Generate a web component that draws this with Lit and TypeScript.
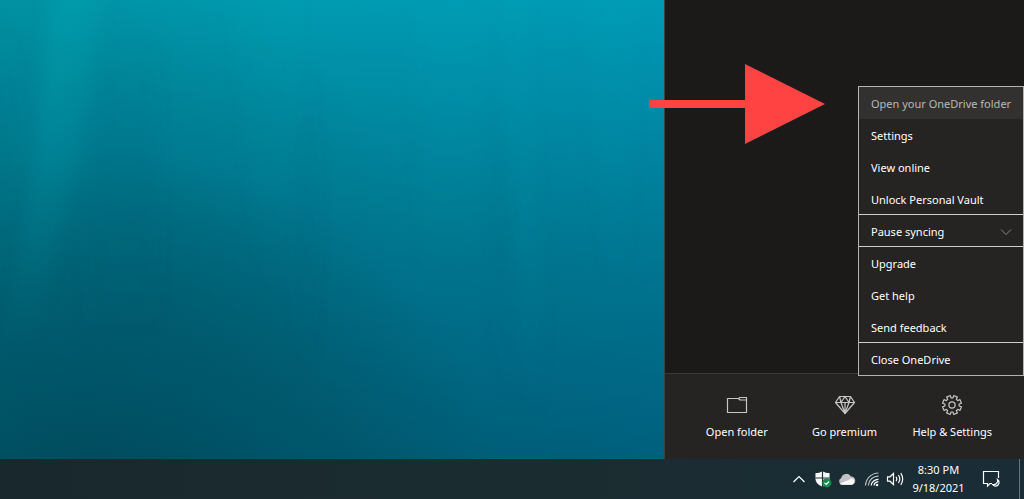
import { LitElement, html, css, svg } from "lit";
import { customElement } from "lit/decorators.js";
import { classMap } from "lit/directives/class-map.js";

interface MenuEntry {
  label: string;
  active?: boolean;
  divided?: boolean;
  expandable?: boolean;
}

const MENU: MenuEntry[] = [
  { label: "Open your OneDrive folder", active: true },
  { label: "Settings" },
  { label: "View online" },
  { label: "Unlock Personal Vault", divided: true },
  { label: "Pause syncing", divided: true, expandable: true },
  { label: "Upgrade" },
  { label: "Get help" },
  { label: "Send feedback", divided: true },
  { label: "Close OneDrive" },
];

// Outline of a cog with eight flat teeth, centred on (12, 12).
function cogPath(): string {
  const teeth = 8;
  const outer = 9.6;
  const inner = 7.2;
  const points: string[] = [];
  for (let i = 0; i < teeth; i++) {
    const mid = (i / teeth) * Math.PI * 2 + Math.PI / 8;
    const corners: [number, number][] = [
      [inner, -0.25],
      [outer, -0.21],
      [outer, 0.21],
      [inner, 0.25],
    ];
    for (const [r, a] of corners) {
      points.push(`${(12 + r * Math.cos(mid + a)).toFixed(2)} ${(12 + r * Math.sin(mid + a)).toFixed(2)}`);
    }
  }
  return `M${points.join("L")}Z`;
}

@customElement("sea-wallpaper")
export class SeaWallpaper extends LitElement {
  static styles = css`
    :host {
      display: block;
      overflow: hidden;
      background:
        radial-gradient(ellipse 60% 75% at 15% 108%, rgba(0, 68, 84, 0.65), rgba(0, 70, 88, 0) 100%),
        radial-gradient(ellipse 40% 60% at 24% 60%, rgba(0, 84, 104, 0.22), rgba(0, 88, 108, 0) 100%),
        linear-gradient(90deg, rgba(0, 90, 90, 0.2), rgba(0, 110, 130, 0.08) 45%, rgba(0, 130, 190, 0.14)),
        linear-gradient(180deg, #009eb4 0%, #008ba2 25%, #00788f 50%, #006a82 72%, #005a72 100%);
    }
    .rays {
      display: block;
      width: 100%;
      height: 100%;
    }
  `;

  render() {
    return html`
      <svg class="rays" viewBox="0 0 664 459" preserveAspectRatio="none" aria-hidden="true">
        <defs>
          <filter id="soft" x="-50%" y="-10%" width="200%" height="120%"><feGaussianBlur stdDeviation="8 4" /></filter>
          <linearGradient id="fade" x1="0" y1="0" x2="0" y2="1">
            <stop offset="0" stop-color="#12b0bc" stop-opacity=".2" />
            <stop offset=".5" stop-color="#12a8b6" stop-opacity=".16" />
            <stop offset="1" stop-color="#12a4b4" stop-opacity="0" />
          </linearGradient>
          <linearGradient id="shade" x1="0" y1="0" x2="0" y2="1">
            <stop offset="0" stop-color="#00607a" stop-opacity="0" />
            <stop offset=".5" stop-color="#00607a" stop-opacity=".14" />
            <stop offset="1" stop-color="#00607a" stop-opacity="0" />
          </linearGradient>
        </defs>
        <g filter="url(#soft)">
          <path fill="url(#fade)" d="M50 -20H106L70 190L34 350H4L36 170Z" />
          <path fill="url(#fade)" opacity=".6" d="M56 -20H88L48 170L26 290H10L34 170Z" />
          <path fill="url(#fade)" opacity=".3" d="M228 -20H300L284 300H262Z" />
          <path fill="url(#fade)" opacity=".4" d="M410 -20H490L470 290H424Z" />
          <path fill="url(#fade)" opacity=".5" d="M500 -20H524L548 420H526Z" />
          <path fill="url(#fade)" opacity=".4" d="M580 -20H640L625 300H606Z" />
          <path fill="url(#shade)" d="M100 30H160L160 340H80Z" />
          <path fill="url(#shade)" d="M300 60H316L314 380H296Z" />
          <path fill="url(#shade)" d="M490 100H506L520 400H500Z" />
          <path fill="url(#shade)" opacity=".7" d="M0 20H20L8 240H-10Z" />
        </g>
      </svg>
    `;
  }
}

@customElement("onedrive-menu")
export class OneDriveMenu extends LitElement {
  static styles = css`
    :host {
      display: block;
      box-sizing: border-box;
      border: 1px solid #b4b3b2;
      background: #252423;
    }
    .item {
      display: flex;
      align-items: center;
      justify-content: space-between;
      box-sizing: border-box;
      width: 100%;
      height: 32px;
      margin: 0;
      padding: 2px 11px 0 12px;
      border: 0;
      background: transparent;
      color: #fff;
      font: inherit;
      line-height: 16px;
      text-align: left;
      white-space: nowrap;
    }
    .active {
      background: #323130;
      color: #bab8b6;
      padding-right: 0;
    }
    .divided {
      border-bottom: 1px solid #cfcecd;
    }
    .chevron {
      width: 12px;
      height: 12px;
      fill: none;
      stroke: #8a8886;
    }
  `;

  render() {
    return html`${MENU.map(
      (entry) => html`
        <button
          type="button"
          role="menuitem"
          class=${classMap({ item: true, active: !!entry.active, divided: !!entry.divided })}
        >
          <span>${entry.label}</span>
          ${entry.expandable
            ? html`<svg class="chevron" viewBox="0 0 12 12" aria-hidden="true"><path d="M1 3.5L6 8.5L11 3.5" /></svg>`
            : null}
        </button>
      `
    )}`;
  }
}

@customElement("onedrive-panel")
export class OneDrivePanel extends LitElement {
  static styles = css`
    :host {
      display: flex;
      flex-direction: column;
      box-sizing: border-box;
      position: relative;
      border-left: 1px solid #3b4244;
      background: #1b1a19;
    }
    .activity {
      flex: 1;
    }
    .actions {
      display: flex;
      box-sizing: border-box;
      height: 86px;
      padding: 0 18px;
      border-top: 1px solid #3b3a39;
      background: #252423;
    }
    .action {
      display: flex;
      flex: 1;
      flex-direction: column;
      align-items: center;
      gap: 7px;
      margin: 0;
      padding: 19px 0 0;
      border: 0;
      background: transparent;
      color: #fff;
      font: inherit;
      line-height: 16px;
      white-space: nowrap;
    }
    .icon {
      width: 24px;
      height: 24px;
      fill: none;
      stroke: #c8c6c4;
      stroke-width: 1.2;
      stroke-linejoin: round;
    }
    .menu {
      position: absolute;
      right: 0;
      bottom: 83px;
      width: 166px;
    }
  `;

  private action(label: string, shape: unknown) {
    return html`
      <button type="button" class="action">
        <svg class="icon" viewBox="0 0 24 24" aria-hidden="true">${shape}</svg>
        <span>${label}</span>
      </button>
    `;
  }

  render() {
    return html`
      <div class="activity"></div>
      <div class="actions">
        ${this.action(
          "Open folder",
          svg`<path d="M2.5 5.5H13.5L15 4.5H21.5V19.5H2.5Z" /><path d="M13.5 5.5L15 7H21.5" />`
        )}
        ${this.action(
          "Go premium",
          svg`<path d="M6.5 3.5H17.5L21.5 9.5L12 20.5L2.5 9.5Z" /><path d="M2.5 9.5H21.5M8 9.5L12 20.5L16 9.5M6.5 3.5L8 9.5L12 3.5L16 9.5L17.5 3.5M12 9.5V20" />`
        )}
        ${this.action("Help & Settings", svg`<path d=${cogPath()} /><circle cx="12" cy="12" r="3.1" />`)}
      </div>
      <onedrive-menu class="menu" role="menu"></onedrive-menu>
    `;
  }
}

@customElement("task-bar")
export class TaskBar extends LitElement {
  static styles = css`
    :host {
      display: flex;
      align-items: stretch;
      justify-content: flex-end;
      box-sizing: border-box;
      height: 40px;
      background: linear-gradient(90deg, #19282c, #1b2c30 50%, #1a2c36);
      color: #fff;
    }
    .tray {
      display: flex;
      align-items: center;
    }
    .tray-button {
      display: flex;
      align-items: center;
      justify-content: center;
      width: 24px;
      height: 40px;
      margin: 0;
      padding: 0;
      border: 0;
      background: transparent;
      color: inherit;
      font: inherit;
    }
    .glyph {
      width: 18px;
      height: 18px;
      fill: none;
      stroke: #fff;
      stroke-width: 1.2;
    }
    .clock {
      flex-direction: column;
      width: 63px;
      line-height: 18px;
      white-space: nowrap;
    }
    .notices {
      width: 42px;
    }
    .show-desktop {
      width: 5px;
      margin-left: 7px;
      border-left: 1px solid #66747a;
    }
  `;

  private glyph(name: string, shape: unknown) {
    return html`
      <button type="button" class="tray-button" aria-label=${name}>
        <svg class="glyph" viewBox="0 0 18 18" aria-hidden="true">${shape}</svg>
      </button>
    `;
  }

  render() {
    return html`
      <div class="tray">
        ${this.glyph("Show hidden icons", svg`<path d="M3.5 12L9 6.5L14.5 12" />`)}
        ${this.glyph(
          "Windows Security",
          svg`<path fill="#fff" stroke="none" d="M8.5 1.2C6.5 2.6 4 3 1.5 3V8.5C1.5 12.5 4.5 15 8.5 16.8C12.5 15 15.5 12.5 15.5 8.5V3C13 3 10.5 2.6 8.5 1.2Z" />
            <path stroke="#1a2c36" d="M8.5 1V17M1.5 8H15.5" />
            <circle cx="12.8" cy="12.8" r="4.6" fill="#128a4a" stroke="none" />
            <path d="M10.5 12.9L12.2 14.5L15 11.5" />`
        )}
        ${this.glyph(
          "OneDrive",
          svg`<path fill="#bfc3c8" stroke="none" d="M4 14.8A3.6 3.6 0 0 1 3.2 8A5.4 5.4 0 0 1 13 6.4A4.3 4.3 0 0 1 14.2 14.8Z" />
            <path fill="#fafafa" stroke="none" d="M2 13.8C5 11.5 10 11 13.5 8.2A3.5 3.5 0 0 1 14.2 14.8H4Q2.8 14.6 2 13.8Z" />`
        )}
        ${this.glyph(
          "Network",
          svg`<path stroke="#b9c1c5" d="M3.5 15.5A13 13 0 0 1 16.5 3M6.3 15.5A10 10 0 0 1 16.5 6.2" />
            <path d="M9.2 15.5A7 7 0 0 1 16.5 9.3M12 15.5A4.2 4.2 0 0 1 16.5 12" />
            <circle cx="15" cy="15" r="1.3" fill="#fff" stroke="none" />`
        )}
        ${this.glyph(
          "Volume",
          svg`<path d="M1.5 6.8H4L7.5 3.5V14.5L4 11.2H1.5Z" />
            <path d="M10 6.8Q11.6 9 10 11.2M12.4 5Q15.2 9 12.4 13M14.8 3.2Q18.6 9 14.8 14.8" />`
        )}
        <button type="button" class="tray-button clock">
          <span>8:30 PM</span>
          <span>9/18/2021</span>
        </button>
        <button type="button" class="tray-button notices" aria-label="Notifications">
          <svg class="glyph" viewBox="0 0 18 18" aria-hidden="true">
            <path d="M10 13.5H8L5.5 16V13.5H1.5V1.5H16.5V8" />
            <path d="M15.5 9.5A3.6 3.6 0 1 1 10.5 14.5A4 4 0 0 0 15.5 9.5Z" />
          </svg>
        </button>
      </div>
      <button type="button" class="tray-button show-desktop" aria-label="Show desktop"></button>
    `;
  }
}

@customElement("app-root")
export class AppRoot extends LitElement {
  static styles = css`
    :host {
      display: flex;
      flex-direction: column;
      position: relative;
      min-height: 100vh;
      overflow: hidden;
      font-family: "Noto Sans", "Open Sans", sans-serif;
      font-size: 11px;
    }
    .workspace {
      display: flex;
      flex: 1;
    }
    .wallpaper {
      flex: 1;
      min-width: 0;
    }
    .panel {
      flex: none;
      width: 360px;
    }
    .pointer {
      position: absolute;
      top: 64px;
      right: 199px;
      width: 176px;
      height: 80px;
      fill: #ff4343;
      pointer-events: none;
    }
  `;

  render() {
    return html`
      <main class="workspace">
        <sea-wallpaper class="wallpaper"></sea-wallpaper>
        <onedrive-panel class="panel"></onedrive-panel>
      </main>
      <task-bar></task-bar>
      <svg class="pointer" viewBox="0 0 176 80" aria-hidden="true">
        <path d="M0 36H96V0L176 40L96 80V44H0Z" />
      </svg>
    `;
  }
}
